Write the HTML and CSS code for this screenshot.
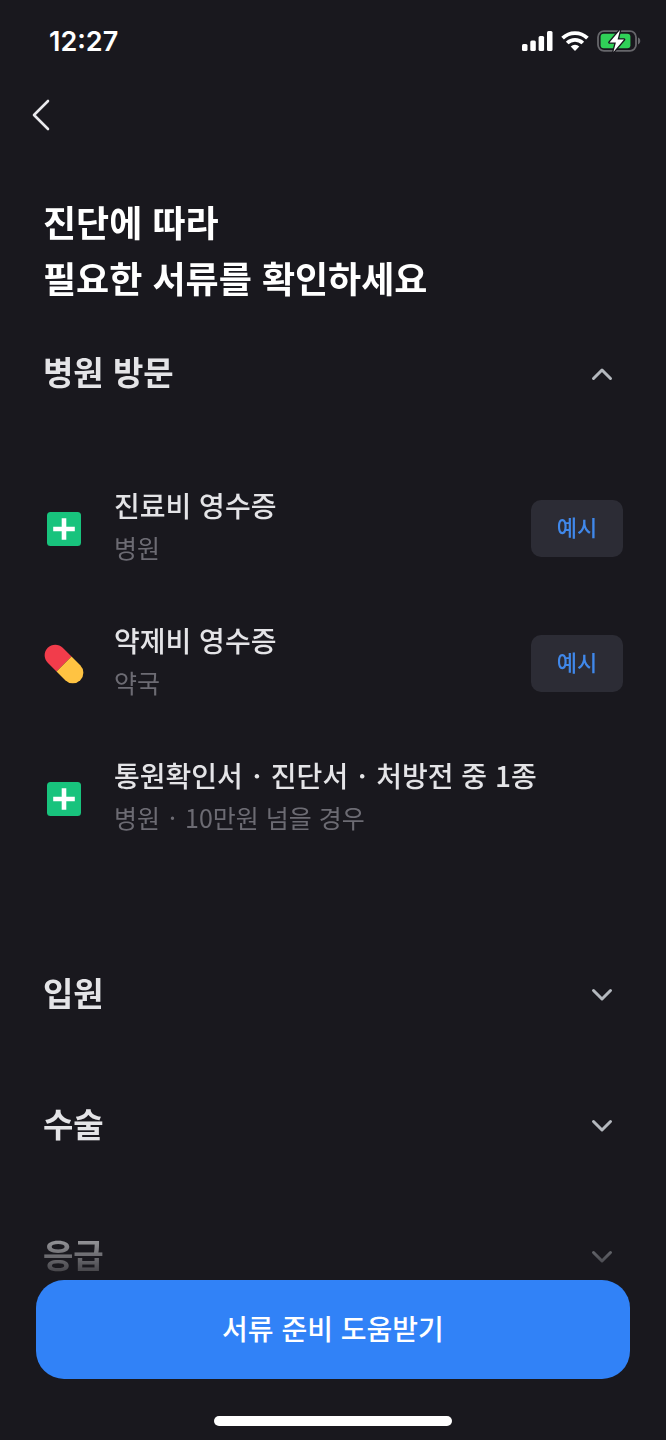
FILE: index.html
```html
<!DOCTYPE html>
<html lang="ko">
<head>
<meta charset="utf-8">
<meta name="viewport" content="width=device-width, initial-scale=1">
<title>필요한 서류 확인</title>
<link rel="stylesheet" href="styles.css">
</head>
<body>
<div class="screen">
  <div class="status">
    <time class="clock">12:27</time>
    <div class="indicators">
      <svg width="31" height="20" viewBox="0 0 31 20" fill="#fff" aria-hidden="true">
        <rect x="0" y="13" width="5.500" height="7" rx="1.500"/>
        <rect x="8.300" y="9.500" width="5.500" height="10.500" rx="1.500"/>
        <rect x="16.600" y="5" width="5.500" height="15" rx="1.500"/>
        <rect x="25" y="0" width="5.500" height="20" rx="1.500"/>
      </svg>
      <svg width="28" height="20" viewBox="0 0 28 20" fill="none" stroke="#fff" stroke-width="3.800" aria-hidden="true">
        <path d="M1.600 7.100a17.800 17.800 0 0 1 24.800 0"/>
        <path d="M6.200 12a11.200 11.200 0 0 1 15.600 0"/>
        <path d="M14 20l-4.300-4.400a6.200 6.200 0 0 1 8.600 0z" fill="#fff" stroke="none"/>
      </svg>
      <svg width="44" height="24" viewBox="0 0 44 24" aria-hidden="true">
        <rect x="1" y="2.200" width="38" height="19.600" rx="6" fill="none" stroke="#66666b" stroke-width="1.800"/>
        <path d="M41 8.600c3 1 3 5.800 0 6.800z" fill="#66666b"/>
        <rect x="3.600" y="4.800" width="29.800" height="14.400" rx="3" fill="#30d158"/>
        <path d="M23 1L12.500 13.400h6.400L16.400 23 27 10.600h-6.400z" fill="#fff" stroke="#19181e" stroke-width="2.600" paint-order="stroke" stroke-linejoin="round"/>
      </svg>
    </div>
  </div>

  <nav class="nav">
    <button class="back" type="button" aria-label="뒤로">
      <svg width="18" height="32" viewBox="0 0 18 32" fill="none" stroke="#e9e9ec" stroke-width="2.600" stroke-linecap="round" stroke-linejoin="round" aria-hidden="true"><path d="M16 2L2 16l14 14"/></svg>
    </button>
  </nav>

  <main class="content">
    <h1 class="title">진단에 따라<br>필요한 서류를 확인하세요</h1>

    <section>
      <h2 class="heading">
        <button class="toggle" type="button" aria-expanded="true" aria-controls="visit">병원 방문
          <svg class="chevron" viewBox="0 0 22 14" aria-hidden="true"><path d="M2.500 11.500L11 3l8.500 8.500"/></svg>
        </button>
      </h2>
      <ul class="docs" id="visit">
        <li class="doc">
          <svg class="icon" viewBox="0 0 42 42" aria-hidden="true"><rect x="4" y="4" width="34" height="34" rx="3.500" fill="#18c37d"/><path d="M21 10.200v21.600M10.200 21h21.600" stroke="#fff" stroke-width="4.600"/></svg>
          <div class="text"><strong class="name">진료비 영수증</strong><span class="place">병원</span></div>
          <button class="example" type="button">예시</button>
        </li>
        <li class="doc">
          <svg class="icon" viewBox="0 0 42 42" aria-hidden="true"><g transform="rotate(45 21 21)"><path d="M21 10.400H8.600a10.600 10.600 0 0 0 0 21.200H21z" fill="#f23c4b"/><path d="M21 10.400h12.400a10.600 10.600 0 0 1 0 21.200H21z" fill="#ffc342"/></g></svg>
          <div class="text"><strong class="name">약제비 영수증</strong><span class="place">약국</span></div>
          <button class="example" type="button">예시</button>
        </li>
        <li class="doc">
          <svg class="icon" viewBox="0 0 42 42" aria-hidden="true"><rect x="4" y="4" width="34" height="34" rx="3.500" fill="#18c37d"/><path d="M21 10.200v21.600M10.200 21h21.600" stroke="#fff" stroke-width="4.600"/></svg>
          <div class="text"><strong class="name">통원확인서 <span class="dot">·</span> 진단서 <span class="dot">·</span> 처방전 중 1종</strong><span class="place">병원 <span class="dot">·</span> 10만원 넘을 경우</span></div>
        </li>
      </ul>
    </section>

    <h2 class="heading">
      <button class="toggle" type="button" aria-expanded="false">입원
        <svg class="chevron" viewBox="0 0 22 14" aria-hidden="true"><path d="M2.500 2.500L11 11l8.500-8.500"/></svg>
      </button>
    </h2>
    <h2 class="heading">
      <button class="toggle" type="button" aria-expanded="false">수술
        <svg class="chevron" viewBox="0 0 22 14" aria-hidden="true"><path d="M2.500 2.500L11 11l8.500-8.500"/></svg>
      </button>
    </h2>
    <h2 class="heading">
      <button class="toggle" type="button" aria-expanded="false">응급
        <svg class="chevron" viewBox="0 0 22 14" aria-hidden="true"><path d="M2.500 2.500L11 11l8.500-8.500"/></svg>
      </button>
    </h2>
  </main>

  <footer class="footer">
    <button class="cta" type="button">서류 준비 도움받기</button>
    <div class="home"></div>
  </footer>
</div>
</body>
</html>
```

FILE: styles.css
```css
* { box-sizing: border-box; }

body {
  margin: 0;
  background: #19181e;
  color: #e4e4e7;
  font-family: "Noto Sans CJK KR", sans-serif;
}

button {
  border: 0;
  padding: 0;
  background: none;
  color: inherit;
  font: inherit;
  cursor: pointer;
}

svg { display: block; flex: none; }

.screen {
  display: flex;
  flex-direction: column;
  height: 100vh;
}

.status {
  display: flex;
  align-items: center;
  justify-content: space-between;
  height: 82px;
  padding: 0 25px 0 49px;
  flex: none;
}

.clock {
  padding-top: 2px;
  color: #fff;
  font: 600 27px/32px Inter, sans-serif;
}

.indicators {
  display: flex;
  align-items: center;
  gap: 8px;
}

.nav {
  display: flex;
  align-items: center;
  height: 66px;
  padding: 0 32px;
  flex: none;
}

.content {
  flex: 1;
  min-height: 0;
  overflow-y: auto;
  scrollbar-width: none;
  padding-top: 45px;
  mask-image: linear-gradient(#000 calc(100% - 72px), rgba(0, 0, 0, 0.12));
}

.title {
  margin: 0;
  padding: 0 43px 3px;
  color: #fff;
  font-size: 36px;
  line-height: 56px;
  font-weight: 700;
}

.heading {
  margin: 0;
  font-size: 33px;
  line-height: 48px;
  font-weight: 700;
}

.toggle {
  display: flex;
  align-items: center;
  justify-content: space-between;
  width: 100%;
  height: 131px;
  padding: 0 53px 6px 43px;
  text-align: left;
}

.chevron {
  width: 22px;
  height: 14px;
  margin-top: 6px;
  fill: none;
  stroke: #b4b8be;
  stroke-width: 3;
  stroke-linecap: round;
  stroke-linejoin: round;
}

.docs {
  list-style: none;
  margin: 0;
  padding: 22px 43px 63px;
}

.doc {
  display: flex;
  align-items: center;
  min-height: 135px;
}

.icon {
  width: 42px;
  height: 42px;
}

.text {
  display: flex;
  flex-direction: column;
  flex: 1;
  padding: 0 0 6px 29px;
}

.name {
  font-size: 28px;
  line-height: 42px;
  font-weight: 500;
}

.place {
  color: #6c6b73;
  font-size: 25px;
  line-height: 42px;
  font-weight: 400;
}

.dot { margin: 0 2px; }

.example {
  width: 92px;
  height: 57px;
  padding-bottom: 5px;
  border-radius: 10px;
  background: #2c2c35;
  color: #4088ea;
  font-size: 22px;
  font-weight: 500;
}

.footer {
  display: flex;
  flex-direction: column;
  align-items: center;
  gap: 37px;
  padding: 0 36px 14px;
  flex: none;
}

.cta {
  width: 100%;
  height: 99px;
  padding-bottom: 4px;
  border-radius: 28px;
  background: #3182f7;
  color: #fff;
  font-size: 28px;
  font-weight: 500;
}

.home {
  width: 40%;
  min-width: 238px;
  max-width: 100%;
  height: 10px;
  border-radius: 5px;
  background: #fff;
}
```
